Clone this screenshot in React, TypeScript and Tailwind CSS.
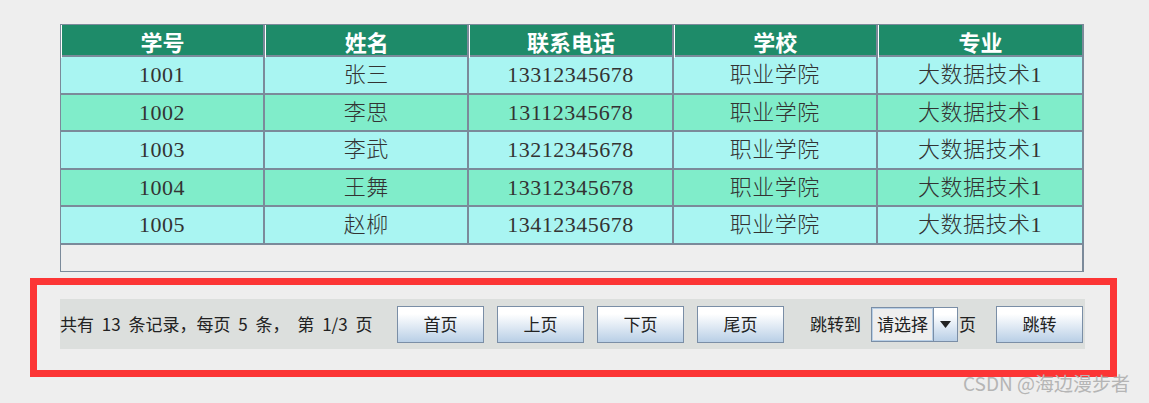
import React from "react";

interface Student {
  id: string;
  name: string;
  phone: string;
  school: string;
  major: string;
}

const students: Student[] = [
  { id: "1001", name: "张三", phone: "13312345678", school: "职业学院", major: "大数据技术1" },
  { id: "1002", name: "李思", phone: "13112345678", school: "职业学院", major: "大数据技术1" },
  { id: "1003", name: "李武", phone: "13212345678", school: "职业学院", major: "大数据技术1" },
  { id: "1004", name: "王舞", phone: "13312345678", school: "职业学院", major: "大数据技术1" },
  { id: "1005", name: "赵柳", phone: "13412345678", school: "职业学院", major: "大数据技术1" },
];

const headers = ["学号", "姓名", "联系电话", "学校", "专业"];

const serif = { fontFamily: '"Liberation Serif", "Noto Sans CJK SC", serif' };
const sans = { fontFamily: '"Noto Sans CJK SC", "Liberation Sans", sans-serif' };

function SwingButton({ label }: { label: string }) {
  return (
    <button className="w-[87px] h-[37px] border border-[#7a8ea6] bg-gradient-to-b from-white from-[20%] to-[#b9cfe6] text-[17px] text-[#222] flex items-center justify-center">
      {label}
    </button>
  );
}

export default function App() {
  return (
    <div className="relative w-[1149px] h-[403px] bg-[#eeeeee] overflow-hidden pt-[24px]" style={sans}>
      {/* table */}
      <div className="ml-[60px] w-[1024px] h-[248px] border border-[#7b8a9a] border-r-2 bg-[#eeeeee]">
        <div className="grid grid-cols-5 h-[32px] bg-[#1e8b69] border-b-2 border-[#7b8a9a]">
          {headers.map((h, i) => (
            <div
              key={h}
              className={`flex items-center justify-center text-white font-bold text-[22px] border-l border-white ${i < 4 ? "border-r-2 border-r-[#7b8a9a]" : ""}`}
            >
              {h}
            </div>
          ))}
        </div>
        {students.map((s, r) => (
          <div
            key={s.id}
            className={`grid grid-cols-5 h-[37.5px] border-b-2 border-[#7b8a9a] ${r % 2 === 0 ? "bg-[#a9f5f2]" : "bg-[#80edca]"}`}
          >
            {[s.id, s.name, s.phone, s.school, s.major].map((v, i) => (
              <div
                key={i}
                className={`flex items-center justify-center text-[22px] font-light tracking-[0.5px] text-[#333] ${i < 4 ? "border-r-2 border-[#7b8a9a]" : ""}`}
                style={serif}
              >
                {v}
              </div>
            ))}
          </div>
        ))}
      </div>

      {/* pager, outlined in red */}
      <div className="ml-[30px] mt-[6px] w-[1087px] h-[99px] border-[7px] border-[#fc3535] pt-[14px] pl-[23px]">
        <div className="w-[1025px] h-[50px] bg-[#dcdfdd] flex items-center text-[17px] text-[#222]">
          <span className="w-[337px] whitespace-nowrap [word-spacing:4px]">共有 13 条记录，每页 5 条， 第 1/3 页</span>
          <div className="flex gap-[13px]">
            <SwingButton label="首页" />
            <SwingButton label="上页" />
            <SwingButton label="下页" />
            <SwingButton label="尾页" />
          </div>
          <span className="ml-[26px] whitespace-nowrap">跳转到</span>
          <div className="ml-[10px] flex w-[87px] h-[35px] border border-[#7a8ea6]">
            <div className="flex-1 flex items-center pl-[4px] bg-[#eeeeee] border border-[#b8cfe6]">请选择</div>
            <div className="w-[24px] border-l border-[#7a8ea6] bg-gradient-to-b from-white from-[20%] to-[#b9cfe6] flex items-center justify-center">
              <svg width="11" height="7" viewBox="0 0 11 7">
                <path d="M0 0 H11 L5.5 7 Z" fill="#222" />
              </svg>
            </div>
          </div>
          <span className="ml-[1px]">页</span>
          <div className="ml-[20px]">
            <SwingButton label="跳转" />
          </div>
        </div>
      </div>

      {/* watermark */}
      <div className="absolute left-[963px] top-[369px] text-[19px] text-[#b5b5b5] whitespace-nowrap">
        CSDN @海边漫步者
      </div>
    </div>
  );
}
